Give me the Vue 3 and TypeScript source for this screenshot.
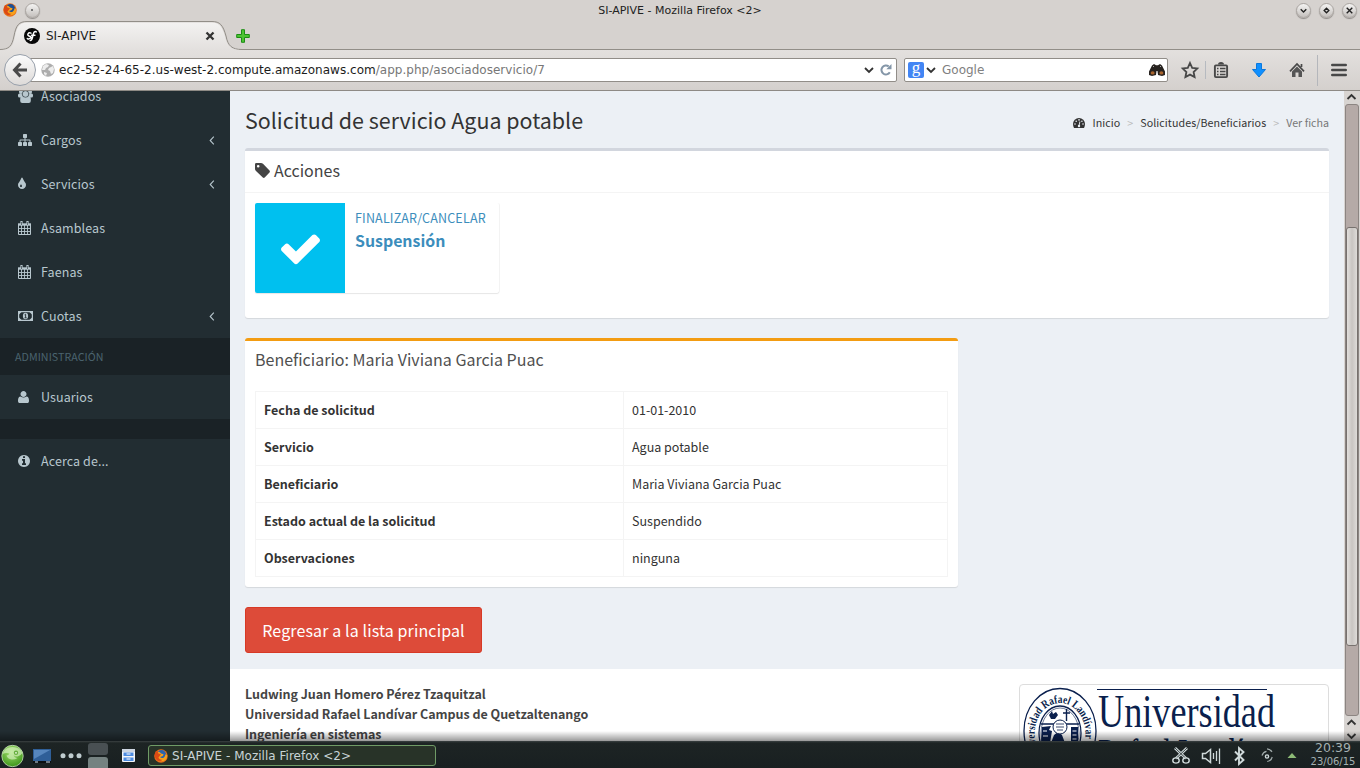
<script setup lang="ts">
interface MenuItem {
  label: string
  icon: string
  arrow?: boolean
}

const mainMenu: MenuItem[] = [
  { label: 'Asociados', icon: 'users' },
  { label: 'Cargos', icon: 'sitemap', arrow: true },
  { label: 'Servicios', icon: 'tint', arrow: true },
  { label: 'Asambleas', icon: 'calendar' },
  { label: 'Faenas', icon: 'calendar' },
  { label: 'Cuotas', icon: 'money', arrow: true },
]
const adminMenu: MenuItem[] = [{ label: 'Usuarios', icon: 'user' }]
const aboutMenu: MenuItem[] = [{ label: 'Acerca de...', icon: 'info' }]

const sections = [
  { id: 'main', header: '', items: mainMenu, gap: false },
  { id: 'admin', header: 'ADMINISTRACIÓN', items: adminMenu, gap: false },
  { id: 'about', header: '', items: aboutMenu, gap: true },
]

const glyphs: Record<string, { d: string; offset: number }> = {
  sitemap: {
    offset: 0,
    d: 'M1792 1248v320q0 40-28 68t-68 28h-320q-40 0-68-28t-28-68v-320q0-40 28-68t68-28h96v-192h-512v192h96q40 0 68 28t28 68v320q0 40-28 68t-68 28h-320q-40 0-68-28t-28-68v-320q0-40 28-68t68-28h96v-192h-512v192h96q40 0 68 28t28 68v320q0 40-28 68t-68 28h-320q-40 0-68-28t-28-68v-320q0-40 28-68t68-28h96v-192q0-52 38-90t90-38h512v-192h-96q-40 0-68-28t-28-68v-320q0-40 28-68t68-28h320q40 0 68 28t28 68v320q0 40-28 68t-68 28h-96v192h512q52 0 90 38t38 90v192h96q40 0 68 28t28 68z',
  },
  tint: {
    offset: 384,
    d: 'M896 1152q0-36-20-69-1-1-15.5-22.5t-25.5-38-25-44-21-50.5q-4-16-21-16t-21 16q-7 23-21 50.5t-25 44-25.5 38-15.5 22.5q-20 33-20 69 0 53 37.5 90.5t90.5 37.5 90.5-37.5 37.5-90.5zm512-128q0 212-150 362t-362 150-362-150-150-362q0-145 81-275 6-9 62.5-90.5t101-151 99.5-178 83-201.5q9-30 34-47t51-17 51.5 17 33.5 47q28 93 83 201.5t99.5 178 101 151 62.5 90.5q81 127 81 275z',
  },
  user: {
    offset: 192,
    d: 'M1600 1399q0 109-62.5 187t-150.5 78h-982q-88 0-150.5-78t-62.5-187q0-85 8.500-160.500t31.500-152 58.500-131 94-89 134.500-34.500q195 128 377 128t377-128q76 0 134.500 34.500t94 89 58.500 131 31.500 152 8.500 160.500zm-320-887q0 159-112.500 271.500t-271.500 112.500-271.500-112.500-112.500-271.500 112.500-271.500 271.500-112.500 271.500 112.500 112.500 271.500z',
  },
  info: {
    offset: 128,
    d: 'M1152 1376v-160q0-14-9-23t-23-9h-96v-512q0-14-9-23t-23-9h-320q-14 0-23 9t-9 23v160q0 14 9 23t23 9h96v320h-96q-14 0-23 9t-9 23v160q0 14 9 23t23 9h448q14 0 23-9t9-23zm-128-896v-160q0-14-9-23t-23-9h-192q-14 0-23 9t-9 23v160q0 14 9 23t23 9h192q14 0 23-9t9-23zm640 416q0 209-103 385.5t-279.5 279.5-385.5 103-385.5-103-279.5-279.5-103-385.5 103-385.5 279.5-279.5 385.5-103 385.5 103 279.5 279.5 103 385.5z',
  },
}

const rows: [string, string][] = [
  ['Fecha de solicitud', '01-01-2010'],
  ['Servicio', 'Agua potable'],
  ['Beneficiario', 'Maria Viviana Garcia Puac'],
  ['Estado actual de la solicitud', 'Suspendido'],
  ['Observaciones', 'ninguna'],
]
</script>

<template>
  <div class="desktop">
    <header class="chrome">
      <div class="titlebar">
        <svg width="14" height="14" viewBox="0 0 16 16">
          <circle cx="8" cy="8" r="7.7" fill="#e8701a" />
          <circle cx="8.6" cy="6.4" r="5.2" fill="#1d4f94" />
          <path d="M5 3q2 0 3 2l3 1-1 2-3 1q1 2 4 1 2-1 2-4l2 1q0 6-6 7-6 0-7-6z" fill="#f6a21c" />
          <path d="M1 5Q2 2 4 2l1 3 3 1-3 4q2 3 5 2-3 3-6 1Q0 10 1 5z" fill="#dc4a14" />
        </svg>
        <span class="orb"><i></i></span>
        <span class="title">SI-APIVE - Mozilla Firefox &lt;2&gt;</span>
        <span class="orb"><svg viewBox="0 0 14 14"><path d="M4 5.7l3 3 3-3" /></svg></span>
        <span class="orb"><svg viewBox="0 0 14 14"><path d="M7 4.5L9.5 7 7 9.5 4.5 7z" /></svg></span>
        <span class="orb"><svg viewBox="0 0 14 14"><path d="M4 4l6 6M10 4l-6 6" /></svg></span>
      </div>
      <div class="tabstrip">
        <svg class="tab-shape" width="1360" height="30" viewBox="0 0 1360 30">
          <defs>
            <linearGradient id="tabfill" x1="0" y1="0" x2="0" y2="1">
              <stop offset="0" stop-color="#f3f2f1" />
              <stop offset="1" stop-color="#e3e0de" />
            </linearGradient>
          </defs>
          <path d="M0 29.5C9 29.5 12 26 14 16C16 5 19 1.500 27 1.500H212C220 1.500 223 5 226 16C228 26 232 29.500 242 29.500H1360" fill="none" stroke="#928e88" />
          <path d="M2 30C11 29.500 13 26 15 16C17 6 20 2.500 27 2.500H212C219 2.500 222 6 225 16C227 26 231 29.500 240 30z" fill="url(#tabfill)" />
        </svg>
        <div class="tab">
          <svg width="16" height="16" viewBox="0 0 16 16">
            <circle cx="8" cy="8" r="8" fill="#080808" />
            <path d="M7 5.200Q5 4.200 4 5.800T6 8.500 4.600 11Q3.600 11.300 3.300 10.500M12.300 4Q11.500 2.800 10 4.200 9.300 5.500 8.600 9T6.200 12.500M7.500 7.300h3.500" fill="none" stroke="#fff" stroke-width="1.400" stroke-linecap="round" />
          </svg>
          <span class="tab-label">SI-APIVE</span>
          <svg width="10" height="10" viewBox="0 0 10 10"><path d="M1.500 1.500l7 7M8.500 1.500l-7 7" stroke="#333" stroke-width="2.300" /></svg>
        </div>
        <svg class="plus" width="14" height="14" viewBox="0 0 14 14">
          <path d="M5.500.7h3v4.800h4.800v3H8.500v4.800h-3V8.500H.7v-3h4.800z" fill="#4cc432" stroke="#1c8d14" stroke-linejoin="round" />
        </svg>
      </div>
      <div class="toolbar">
        <div class="back">
          <svg width="16" height="16" viewBox="0 0 16 16"><path d="M8.500 1.500L2.500 8l6 6.500M3 8h12" fill="none" stroke="#4a4a4a" stroke-width="3" /></svg>
        </div>
        <div class="urlbar">
          <svg width="14" height="14" viewBox="0 0 14 14">
            <circle cx="7" cy="7" r="6.700" fill="#adadad" />
            <path d="M2 3l3-2 3 1-1 2-2 1-1 2-3 0zM8 5l4-2 1 3-1 4-2 1-1-3-2-1zM3 9l3 1-1 3-2-2z" fill="#ededed" />
          </svg>
          <span class="url">ec2-52-24-65-2.us-west-2.compute.amazonaws.com<em>/app.php/asociadoservicio/7</em></span>
          <svg width="10" height="8" viewBox="0 0 10 8"><path d="M1 2l4 4 4-4" fill="none" stroke="#333" stroke-width="1.800" /></svg>
          <svg class="reload" width="12" height="12" viewBox="0 0 12 12">
            <path d="M9.800 8.300A4.500 4.500 0 1 1 8.700 2.400" fill="none" stroke="#8496a8" stroke-width="2" />
            <path d="M11.500 0v5.200H6.300z" fill="#8496a8" />
          </svg>
        </div>
        <div class="search">
          <span class="gbox">g</span>
          <svg width="10" height="8" viewBox="0 0 10 8"><path d="M1 2l4 4 4-4" fill="none" stroke="#333" stroke-width="1.800" /></svg>
          <span class="search-label">Google</span>
          <svg width="16" height="12" viewBox="0 0 16 12">
            <path d="M3 1.500L5 0l2 1.200h2L11 0l2 1.500 3 6V11l-3 1-4-1-.5-4h-1L7 11l-4 1-3-1V7.500z" fill="#26211e" />
            <ellipse cx="3.600" cy="8.900" rx="2" ry="1.700" fill="#a8632c" />
            <ellipse cx="12.400" cy="8.900" rx="2" ry="1.700" fill="#a8632c" />
            <path d="M4 3l1-1M11 2l1 1" stroke="#aaa" />
          </svg>
        </div>
        <svg class="tools" width="176" height="34" viewBox="0 0 176 34">
          <path d="M6 10l2.200 4.800 5.100.6-3.700 3.600 1 5.100L6 21.600l-4.600 2.500 1-5.100-3.700-3.600 5.100-.6z" fill="none" stroke="#484848" stroke-width="1.800" transform="translate(4 0)" />
          <path d="M25.500 8v18" stroke="#b6bac0" />
          <rect x="34.900" y="12.400" width="12.200" height="11.700" rx="1" fill="none" stroke="#484848" stroke-width="1.900" />
          <path d="M38 11.500q0-2.500 3-2.500t3 2.500z" fill="#484848" />
          <path d="M37 15.500h1.500M40 15.500h5.500M37 18.500h1.500M40 18.500h5.500M37 21.500h1.500M40 21.500h5.500" stroke="#484848" stroke-width="1.300" />
          <path d="M76.500 10.500h5v6h4L79 24l-6.500-7.500h4z" fill="#1090ff" stroke="#0a78dd" stroke-linejoin="round" />
          <path d="M110 18.300l7-7.300 7 7.300M121.500 11v3" fill="none" stroke="#484848" stroke-width="1.700" />
          <path d="M112 18.500l5-5 5 5v5.500h-3.500v-4.500h-3V24H112z" fill="#555" />
          <path d="M137.500 2v31" stroke="#b4b6bb" />
          <path d="M152.300 12h13.400M152.300 17h13.400M152.300 22h13.400" stroke="#484848" stroke-width="2.600" stroke-linecap="round" />
        </svg>
      </div>
    </header>

    <div class="page">
      <nav class="sidebar">
        <template v-for="s in sections" :key="s.id">
          <div v-if="s.header" class="side-header">{{ s.header }}</div>
          <div v-if="s.gap" class="side-gap"></div>
          <a v-for="item in s.items" :key="item.label" class="side-item">
            <svg class="side-icon" width="16" height="14" viewBox="0 0 16 14">
              <path v-if="glyphs[item.icon]" :d="glyphs[item.icon].d" :transform="`scale(0.0078125) translate(${-glyphs[item.icon].offset} 0)`" fill="currentColor" />
              <g v-else-if="item.icon === 'calendar'" fill="none" stroke="currentColor">
                <path d="M.5 3.500v10h12v-10" />
                <path d="M0 3.500h13" stroke-width="2.400" />
                <path d="M3.500 0v3M9.500 0v3" stroke-width="2.200" />
                <path d="M3.500 4v9M6.500 4v9M9.500 4v9M1 7.500h11M1 10.500h11" stroke-width=".9" />
                <path d="M3.500 1v3M9.500 1v3" stroke="#222d32" stroke-width=".6" />
              </g>
              <g v-else-if="item.icon === 'money'" transform="translate(0 2)">
                <path d="M.6.600h13.800v8.800H.6z" fill="none" stroke="currentColor" stroke-width="1.200" />
                <path d="M1 1h2.600L1 3.500zM14 1h-2.600L14 3.500zM1 9h2.600L1 6.500zM14 9h-2.600L14 6.500z" fill="currentColor" />
                <ellipse cx="7.500" cy="5" rx="2.600" ry="3.200" fill="currentColor" />
                <path d="M6.600 3.800l1-.6v3.600M6.500 6.800h2.200" fill="none" stroke="#222d32" stroke-width=".9" />
              </g>
              <g v-else fill="currentColor">
                <circle cx="3" cy="3" r="2" /><circle cx="12" cy="3" r="2" />
                <rect x="0" y="4.500" width="4.500" height="4" rx="1.500" /><rect x="10.500" y="4.500" width="4.500" height="4" rx="1.500" />
                <path d="M2.200 12V10q0-2.900 2.300-2.900Q7.500 9 10.500 7.100q2.300 0 2.300 2.900v2q0 2-2 2H4.200q-2 0-2-2z" />
                <circle cx="7.500" cy="5" r="3.300" stroke="#222d32" stroke-width=".6" />
              </g>
            </svg>
            <span class="side-label">{{ item.label }}</span>
            <svg v-if="item.arrow" width="6" height="9" viewBox="0 0 6 9"><path d="M4.800.7L1.200 4.500l3.600 3.800" fill="none" stroke="currentColor" stroke-width="1.100" /></svg>
          </a>
        </template>
      </nav>

      <main class="content">
        <div class="content-body">
          <div class="heading">
            <h1>Solicitud de servicio Agua potable</h1>
            <div class="crumbs">
              <svg width="12" height="10" viewBox="0 0 12 10">
                <path d="M6 0a6 6 0 0 1 6 6q0 2-1 4H1Q0 8 0 6a6 6 0 0 1 6-6z" fill="#333" />
                <g fill="#ecf0f5"><circle cx="2" cy="6" r=".8" /><circle cx="3.200" cy="3.200" r=".8" /><circle cx="6" cy="1.900" r=".8" /><circle cx="8.900" cy="3.200" r=".8" /><circle cx="10" cy="6" r=".8" /></g>
                <path d="M6 8l.9-4.500" stroke="#ecf0f5" stroke-width=".9" /><circle cx="6" cy="8" r="1.200" fill="#ecf0f5" />
              </svg>
              <span class="c1">Inicio</span><span class="sep">&gt;</span>
              <span class="c2">Solicitudes/Beneficiarios</span><span class="sep">&gt;</span>
              <span class="c3">Ver ficha</span>
            </div>
          </div>

          <section class="box">
            <div class="box-head bordered">
              <svg width="15" height="15" viewBox="0 0 15 15">
                <path fill-rule="evenodd" d="M0 1.300Q0 0 1.300 0H6Q7 0 8 .8L14.500 7.500Q15.300 8.500 14.500 9.500L9.700 14.500Q8.800 15.300 7.800 14.500L1 8Q0 7 0 6zM3.200 1.900a1.300 1.300 0 1 0 0 2.600 1.300 1.300 0 0 0 0-2.600z" fill="#444" />
              </svg>
              <h3 class="acc">Acciones</h3>
            </div>
            <div class="box-body">
              <div class="info-box">
                <div class="info-icon">
                  <svg width="45" height="45" viewBox="0 0 1792 1792"><path d="M1671 566q0 40-28 68l-724 724-136 136q-28 28-68 28t-68-28l-136-136-362-362q-28-28-28-68t28-68l136-136q28-28 68-28t68 28l294 295 656-657q28-28 68-28t68 28l136 136q28 28 28 68z" fill="#fff" /></svg>
                </div>
                <div class="info-text">
                  <span class="info-kicker">FINALIZAR/CANCELAR</span>
                  <strong>Suspensión</strong>
                </div>
              </div>
            </div>
          </section>

          <section class="box box-warning">
            <div class="box-head"><h3 class="ben">Beneficiario: Maria Viviana Garcia Puac</h3></div>
            <table>
              <tbody>
                <tr v-for="row in rows" :key="row[0]">
                  <th>{{ row[0] }}</th>
                  <td>{{ row[1] }}</td>
                </tr>
              </tbody>
            </table>
          </section>

          <button class="btn">Regresar a la lista principal</button>
        </div>

        <footer class="footer">
          <div class="authors">
            <div>Ludwing Juan Homero Pérez Tzaquitzal</div>
            <div>Universidad Rafael Landívar Campus de Quetzaltenango</div>
            <div>Ingeniería en sistemas</div>
          </div>
          <div class="logo">
            <svg width="308" height="98" viewBox="0 0 308 98">
              <defs><path id="ring" d="M22 71A25.500 31 0 1 1 58 71" /></defs>
              <g fill="none" stroke="#0a1f4d">
                <ellipse cx="40" cy="46" rx="36" ry="42.500" stroke-width="1.300" />
                <ellipse cx="40" cy="48" rx="21" ry="27" stroke-width="1.300" />
                <ellipse cx="40" cy="48" rx="19" ry="25" stroke-width=".6" />
                <path d="M21 39h38M46.500 24v12M43 28h7" stroke-width="1.400" />
              </g>
              <text class="ring-text"><textPath href="#ring" textLength="136" lengthAdjust="spacingAndGlyphs">Universidad Rafael Landívar Gua</textPath></text>
              <path d="M29 30l3-4 1 3 3-2 2 3-3 4h-4zM22 42l9-1-2 4 3 1-2 12h-9zM51 42h7v16h-7zM34 50l4-3 4 3 3 8H31z" fill="#0a1f4d" />
              <circle cx="40" cy="42" r="7" fill="#fff" stroke="#0a1f4d" />
              <path d="M36 39h8M36 42h8M37 45h6" stroke="#0a1f4d" stroke-width=".8" />
              <path d="M52.500 46h4M52.500 50h4M52.500 54h4M23 46h4M23 51h5" stroke="#fff" />
              <path d="M77 4.500h170" stroke="#0a1f4d" stroke-width="1.200" />
              <text class="uni" x="78" y="42" textLength="177" lengthAdjust="spacingAndGlyphs">Universidad</text>
              <text class="uni" x="78" y="86" textLength="181" lengthAdjust="spacingAndGlyphs">Rafael Landívar</text>
            </svg>
          </div>
        </footer>
      </main>

      <div class="scroll">
        <svg class="arrow" width="16" height="13" viewBox="0 0 16 13"><path d="M3.500 8L7.500 4l4 4" /></svg>
        <div class="track"><div class="thumb"></div></div>
        <svg class="arrow" width="16" height="12" viewBox="0 0 16 12"><path d="M3.500 8.500l4-4 4 4" /></svg>
        <svg class="arrow" width="16" height="13" viewBox="0 0 16 13"><path d="M3.500 6l4 4 4-4" /></svg>
      </div>
      <div class="shade"></div>
    </div>

    <footer class="taskbar">
      <svg width="140" height="27" viewBox="0 0 140 27">
        <defs><radialGradient id="suse" cx=".45" cy=".3" r=".7"><stop offset="0" stop-color="#a5e070" /><stop offset="1" stop-color="#3f961b" /></radialGradient></defs>
        <circle cx="12.500" cy="15" r="10.700" fill="url(#suse)" stroke="#d8eccb" stroke-width=".7" />
        <path d="M2.500 13q2-7 10-7 8 0 10 6-2 3-5 3.500-3 0-4-1.500 1 3 4 3-3 2-6 1.500-4-.5-5-4 2 0 3-2-3-1-7 .5z" fill="#d3f0bb" opacity=".7" />
        <circle cx="16" cy="11.800" r="2.200" fill="#67ae3f" /><circle cx="16" cy="11.800" r=".9" fill="#f2fbe9" />
        <rect x="33" y="8" width="18" height="12" fill="#2f5f98" /><path d="M34 9h16L34 18z" fill="#5686bd" />
        <path d="M33 20h18v2H33z" fill="#0b0f12" /><path d="M35 21h3M46 21h4" stroke="#d4e4f5" />
        <g fill="#bfcccf"><circle cx="63" cy="14.700" r="2.500" /><circle cx="71" cy="14.700" r="2.500" /><circle cx="79" cy="14.700" r="2.500" /></g>
        <rect x="88" y="2" width="20" height="12" rx="3" fill="#495053" />
        <rect x="88" y="16" width="20" height="14" rx="3" fill="#758281" />
        <rect x="122" y="8" width="13" height="13" rx="1" fill="#f2f5f9" />
        <path d="M122 8h13v3h-13z" fill="#cdd6e2" />
        <path d="M123.500 11.500h10v3.500h-10zM123.500 16.500h10v3.500h-10z" fill="#4c8be0" /><path d="M126.500 13h4M126.500 18h4" stroke="#fff" stroke-width="1.200" />
      </svg>
      <div class="task">
        <svg width="14" height="14" viewBox="0 0 16 16">
          <circle cx="8" cy="8" r="7.700" fill="#e8701a" />
          <circle cx="8.600" cy="6.400" r="5.200" fill="#2a64b0" />
          <path d="M5 3q2 0 3 2l3 1-1 2-3 1q1 2 4 1 2-1 2-4l2 1q0 6-6 7-6 0-7-6z" fill="#f6a21c" />
          <path d="M1 5Q2 2 4 2l1 3 3 1-3 4q2 3 5 2-3 3-6 1Q0 10 1 5z" fill="#dc4a14" />
        </svg>
        <span>SI-APIVE - Mozilla Firefox &lt;2&gt;</span>
      </div>
      <svg class="tray" width="130" height="27" viewBox="0 0 130 27" fill="none" stroke="#cfd9da">
        <path d="M5 7l11 10.500M17 7L6 17.500" stroke-width="2.800" /><path d="M5 7l11 10.500M17 7L6 17.500" stroke="#293232" stroke-width=".9" />
        <ellipse cx="6" cy="19.500" rx="3.200" ry="2.600" stroke-width="1.400" /><ellipse cx="16" cy="19.500" rx="3.200" ry="2.600" stroke-width="1.400" />
        <path d="M32.500 12.500h3l5-4v13l-5-4h-3z" stroke-width="1.500" /><path d="M43.500 12v6M46.500 10v10M49.500 7.500v15.500" stroke-width="1.300" />
        <path d="M65 10.500l8.500 8.500-4.500 4V7l4.500 4-8.500 8.500" stroke-width="1.900" />
        <circle cx="97" cy="15.500" r="1.600" stroke-width="1.400" /><path d="M92 14.500q1-3.500 4.500-4.200M102.200 16q-1 4-5 4.500M97 7.800q3 0 5 3" stroke-width="1.200" opacity=".75" />
        <path d="M117.500 17l4.500-5 4.500 5z" fill="#8dbb76" stroke="none" />
      </svg>
      <div class="clock"><b>20:39</b><span>23/06/15</span></div>
    </footer>
  </div>
</template>

<style>
body { margin: 0; overflow: hidden; }
</style>

<style scoped>
.desktop {
  width: 1360px; height: 768px; display: flex; flex-direction: column; overflow: hidden;
  font-family: "Noto Sans CJK SC", "Noto Sans", sans-serif; font-size: 12.5px; line-height: 20px; color: #333;
}
.desktop * { box-sizing: border-box; }
svg { display: block; flex: none; }
.chrome { height: 91px; flex: none; background: #d6d2cf; font-family: "DejaVu Sans", sans-serif; color: #1c1c1c; }
.titlebar { height: 20px; display: flex; align-items: center; padding: 0 3px; font-size: 11px; }
.title { flex: 1; text-align: center; padding: 2px 0 0 32px; color: #222; }
.orb {
  width: 15px; height: 15px; border-radius: 50%; margin-left: 8px; flex: none;
  background: linear-gradient(#f4f3f2, #c4c0bd); border: 1px solid #aaa5a1; box-shadow: 0 1px 1px #8f8b88;
}
.orb svg { width: 13px; height: 13px; fill: none; stroke: #222; stroke-width: 1.5; }
.orb i { display: block; width: 2px; height: 2px; margin: 5px 0 0 5px; background: #777; }
.tabstrip { height: 30px; position: relative; display: flex; align-items: center; }
.tab-shape { position: absolute; left: 0; top: 0; }
.tab { position: relative; display: flex; align-items: center; width: 215px; padding: 1px 0 0 24px; font-size: 12px; }
.tab-label { flex: 1; padding: 1px 0 0 6px; }
.plus { position: relative; margin-left: 21px; margin-top: 2px; }
.toolbar { height: 41px; display: flex; align-items: center; padding: 0 0 1px 4px; background: linear-gradient(#e3e0de, #d4d0cd); border-bottom: 1px solid #8e8a85; }
.back {
  width: 32px; height: 32px; border-radius: 50%; border: 1px solid #98a0ab; z-index: 1; flex: none;
  display: flex; align-items: center; justify-content: center; background: linear-gradient(#fbfbfb, #dddad8);
}
.urlbar, .search { height: 24px; background: #fff; border: 1px solid #918d88; border-radius: 2px; display: flex; align-items: center; font-size: 12px; }
.urlbar { width: 869px; margin-left: -8px; padding: 0 4px 0 12px; flex: none; }
.url { flex: 1; padding-left: 4px; white-space: nowrap; letter-spacing: .025px; }
.url em { font-style: normal; color: #777; }
.reload { margin-left: 6px; }
.search { width: 264px; margin-left: 7px; padding: 0 2px 0 3px; flex: none; }
.gbox { width: 16px; height: 16px; border-radius: 2px; background: #4285f4; color: #fff; font: 17px/12px "Liberation Serif", serif; text-align: center; margin-right: 2px; }
.search-label { flex: 1; padding-left: 6px; color: #808080; }
.tools { margin-left: 12px; }

.page { height: 650px; flex: none; display: flex; position: relative; overflow: hidden; }
.sidebar { width: 230px; background: #222d32; color: #b8c7ce; margin-top: -17px; height: 667px; flex: none; }
.side-item { height: 44px; display: flex; align-items: center; padding: 0 15px 0 18px; }
.side-icon { overflow: visible; }
.side-label { flex: 1; padding-left: 7px; letter-spacing: .1px; }
.side-header { height: 37px; background: #1a2226; color: #4b646f; font-size: 10.7px; line-height: 37px; padding-left: 15px; letter-spacing: .05px; }
.side-gap { height: 20px; background: #1a2226; }
.content { flex: 1; background: #ecf0f5; display: flex; flex-direction: column; min-width: 0; }
.content-body { padding: 15px 15px 0; height: 578px; flex: none; }
.heading { display: flex; justify-content: space-between; height: 42px; }
h1 { margin: -1px 0 0; font-size: 21.45px; line-height: 30px; font-weight: 400; white-space: nowrap; }
.crumbs { display: flex; align-items: center; height: 34px; font-size: 10.7px; color: #333; white-space: nowrap; }
.c1 { padding-left: 7px; letter-spacing: .05px; }
.c2 { letter-spacing: .07px; }
.sep { color: #bbb; width: 20px; text-align: center; }
.c3 { color: #777; }
.box { background: #fff; border-top: 3px solid #d2d6de; border-radius: 3px; box-shadow: 0 1px 1px rgba(0,0,0,.1); height: 170px; margin-bottom: 20px; }
.box-warning { width: 713px; height: 249px; border-top-color: #f39c12; }
.box-head { height: 40px; display: flex; align-items: center; padding: 0 10px; }
.bordered { height: 42px; border-bottom: 1px solid #f4f4f4; }
.bordered svg { margin-top: -2px; }
h3 { margin: -4px 0 0; font-size: 16px; line-height: 20px; font-weight: 400; color: #444; white-space: nowrap; }
.acc { padding-left: 4px; }
.ben { color: #505050; }
.box-body { padding: 10px; }
.info-box { width: 244px; height: 90px; display: flex; border-radius: 2px; box-shadow: 0 1px 1px rgba(0,0,0,.1), 1px 0 0 rgba(0,0,0,.04); color: #3c8dbc; }
.info-icon { width: 90px; background: #00c0ef; border-radius: 2px 0 0 2px; display: flex; align-items: center; justify-content: center; }
.info-text { padding: 5px 10px; display: flex; flex-direction: column; }
.info-kicker { letter-spacing: .17px; }
.info-text strong { font-size: 15.9px; line-height: 25px; }
table { width: 693px; margin: 10px 10px 0; border-collapse: collapse; table-layout: fixed; }
th, td { border: 1px solid #f4f4f4; height: 37px; padding: 0 8px; text-align: left; line-height: 20px; }
th { width: 368px; }
.btn {
  display: block; width: 237px; height: 46px; background: #dd4b39; border: 1px solid #d73925; border-radius: 3px;
  color: #fff; font: 16px/24px "Noto Sans CJK SC", sans-serif; letter-spacing: .12px; padding: 0; white-space: nowrap;
}
.footer { flex: 1; background: #fff; padding: 15px 15px 0; display: flex; justify-content: space-between; color: #444; font-weight: 700; overflow: hidden; letter-spacing: -.03px; }
.logo { width: 310px; height: 100px; border: 1px solid #ddd; border-radius: 4px; overflow: hidden; letter-spacing: 0; flex: none; }
.uni { font-family: "Liberation Serif", serif; font-weight: 400; font-size: 46px; fill: #0a1f4d; }
.ring-text { font-family: "Liberation Serif", serif; font-weight: 700; font-size: 11.5px; fill: #0a1f4d; }
.scroll { width: 16px; background: #d8d4d1; flex: none; display: flex; flex-direction: column; }
.arrow path { fill: none; stroke: #333; stroke-width: 1.8; }
.track { height: 612px; width: 14px; margin-left: 1px; background: #b5aaa7; border: 1px solid #8c8582; border-radius: 3px; }
.thumb { height: 419px; margin-top: 122px; border: 1px solid #77716e; border-radius: 3px; background: linear-gradient(90deg, #e3e0dd, #c9c5c2 50%, #dedbd8); }
.shade { position: absolute; left: 0; right: 0; bottom: 0; height: 10px; background: linear-gradient(rgba(0,0,0,0), rgba(0,0,0,.4)); }

.taskbar { height: 27px; background: linear-gradient(#3b4142, #1d2424 2px, #192021); display: flex; font-family: "DejaVu Sans", sans-serif; color: #c9d4d6; }
.task { width: 288px; height: 21px; margin: 4px 0 0 8px; border: 1px solid #6f9b66; border-radius: 3px; background: #283328; display: flex; align-items: center; gap: 4px; padding-left: 5px; font-size: 12px; white-space: nowrap; letter-spacing: .02px; }
.tray { margin-left: 734px; }
.clock { width: 60px; padding-left: 6px; display: flex; flex-direction: column; align-items: center; color: #a3b0b1; }
.clock b { font-weight: 400; font-size: 12.5px; line-height: 14px; }
.clock span { font-size: 10px; line-height: 13px; }
</style>
